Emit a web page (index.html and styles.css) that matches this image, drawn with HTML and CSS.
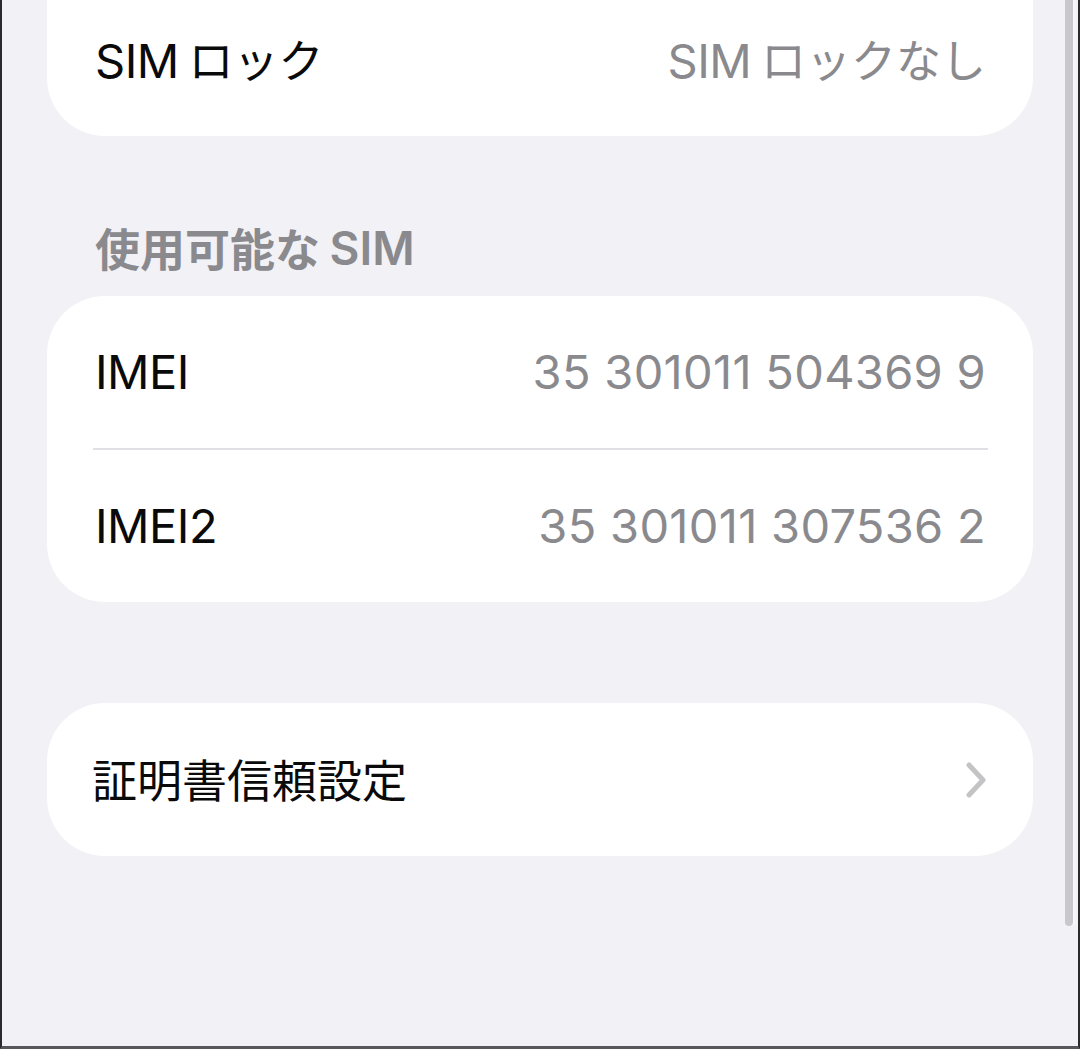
FILE: index.html
```html
<!DOCTYPE html>
<html lang="ja">
<head>
<meta charset="utf-8">
<title>SIM 設定</title>
<link rel="stylesheet" href="styles.css">
</head>
<body>
<div class="screen">
  <div class="content">
    <div class="card card-top">
      <div class="row">
        <span class="label">SIM <span class="ja">ロック</span></span>
        <span class="value">SIM <span class="ja">ロックなし</span></span>
      </div>
    </div>

    <div class="section-header"><span class="ja">使用可能な</span>&nbsp;SIM</div>

    <div class="card">
      <div class="row">
        <span class="label">IMEI</span>
        <span class="value num">35 301011 504369 9</span>
      </div>
      <div class="separator"></div>
      <div class="row">
        <span class="label">IMEI2</span>
        <span class="value num">35 301011 307536 2</span>
      </div>
    </div>

    <div class="card card-link">
      <div class="row row-link">
        <span class="label"><span class="ja">証明書信頼設定</span></span>
        <svg class="chevron" width="24" height="38" viewBox="0 0 24 38" aria-hidden="true">
          <path d="M5 4 L19 19 L5 34" fill="none" stroke="#c4c4c7" stroke-width="5" stroke-linecap="round" stroke-linejoin="round"/>
        </svg>
      </div>
    </div>
  </div>
  <div class="scrollbar"></div>
</div>
</body>
</html>
```
FILE: styles.css
```css
html, body {
  margin: 0;
  padding: 0;
  background: #f2f2f7;
}

body {
  font-family: Inter, "Noto Sans CJK JP", sans-serif;
}

.screen {
  position: relative;
  box-sizing: border-box;
  width: 1080px;
  height: 1049px;
  overflow: hidden;
  background: #f1f1f6;
  border-left: 2px solid #2a2a2f;
  border-right: 2px solid #2a2a2f;
  border-bottom: 3px solid #58585c;
}

.content {
  padding: 0 45px;
  display: flex;
  flex-direction: column;
}

.card {
  background: #ffffff;
  border-radius: 58px;
  overflow: hidden;
}

.card-top {
  margin-top: -16px;
  border-radius: 0 0 58px 58px;
}

.row {
  box-sizing: border-box;
  height: 152px;
  display: flex;
  align-items: center;
  justify-content: space-between;
  padding: 0 47px 0 48px;
}

.row-link {
  height: 153px;
}

.label {
  font-size: 47px;
  line-height: 60px;
  color: #0a0a0a;
  font-weight: 400;
  letter-spacing: -0.5px;
}

.value {
  font-size: 47px;
  line-height: 60px;
  color: #8a8a8e;
  font-weight: 400;
  letter-spacing: -0.5px;
}

.value.num {
  letter-spacing: 0.3px;
}

.ja {
  font-family: "Noto Sans CJK JP", sans-serif;
  font-size: 45px;
  letter-spacing: 0;
}

.label .ja,
.value .ja {
  margin-left: -3px;
}

.separator {
  height: 2px;
  background: #e0e0e4;
  margin: 0 45px 0 46px;
}

.section-header {
  box-sizing: border-box;
  margin-top: 82px;
  margin-bottom: 18px;
  padding-left: 48px;
  height: 60px;
  display: flex;
  align-items: center;
  font-size: 46px;
  line-height: 60px;
  font-weight: 600;
  color: #8a8a8e;
  white-space: nowrap;
}

.section-header .ja {
  font-size: 45px;
  margin-right: -2px;
}

.card-link {
  margin-top: 101px;
}

.chevron {
  display: block;
  margin-right: -2px;
}

.scrollbar {
  position: absolute;
  top: 0;
  right: 5px;
  width: 8px;
  height: 926px;
  border-radius: 0 0 4px 4px;
  background: #c8c8cc;
  box-shadow: 3px 0 0 #f7f7fa;
}
```
